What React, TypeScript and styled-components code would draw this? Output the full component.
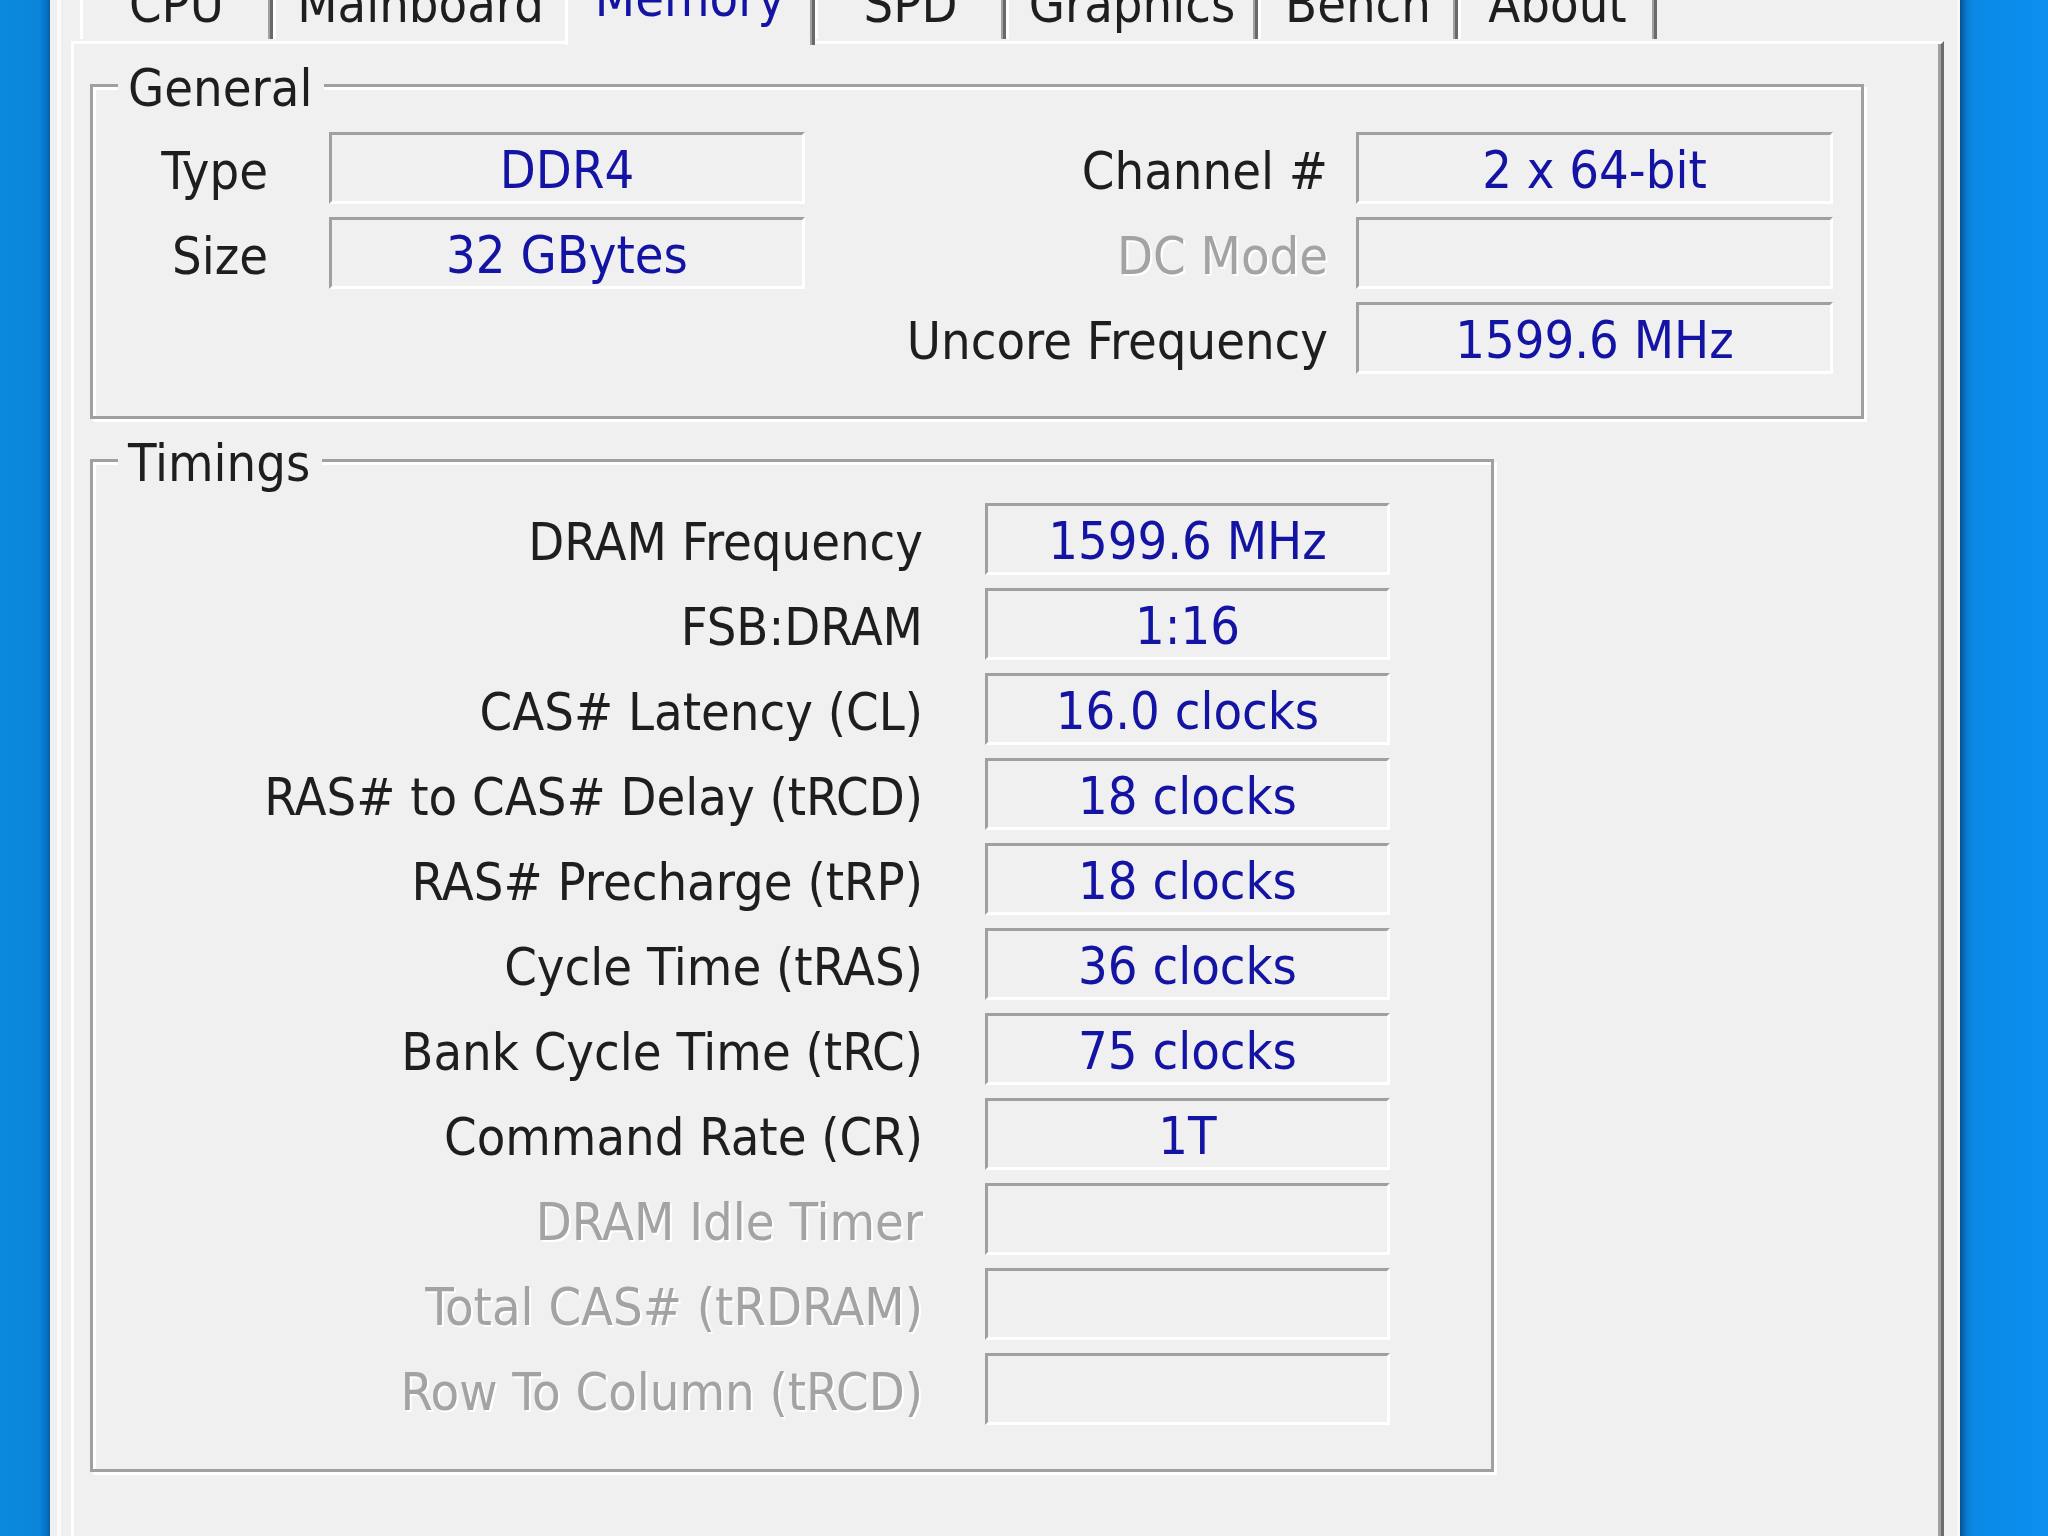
import React from 'react'
import styled, { createGlobalStyle } from 'styled-components'

const GlobalStyle = createGlobalStyle`
  html, body {
    margin: 0;
    padding: 0;
    background: #0a86dc;
  }
  body {
    font-family: "DejaVu Sans Condensed", "Liberation Sans", sans-serif;
    font-size: 52px;
  }
`;

const tabs = ['CPU', 'Mainboard', 'Memory', 'SPD', 'Graphics', 'Bench', 'About'];
const tabWidths = [193, 292, 250, 191, 252, 200, 199];

const timings = [
  { label: 'DRAM Frequency', value: '1599.6 MHz' },
  { label: 'FSB:DRAM', value: '1:16' },
  { label: 'CAS# Latency (CL)', value: '16.0 clocks' },
  { label: 'RAS# to CAS# Delay (tRCD)', value: '18 clocks' },
  { label: 'RAS# Precharge (tRP)', value: '18 clocks' },
  { label: 'Cycle Time (tRAS)', value: '36 clocks' },
  { label: 'Bank Cycle Time (tRC)', value: '75 clocks' },
  { label: 'Command Rate (CR)', value: '1T' },
  { label: 'DRAM Idle Timer', value: '', muted: true },
  { label: 'Total CAS# (tRDRAM)', value: '', muted: true },
  { label: 'Row To Column (tRCD)', value: '', muted: true },
];

const App: React.FC = () => {
  return (
    <>
      <GlobalStyle />
      <Screen>
        <DesktopLeft />
        <Window>
          <TabRow>
            {tabs.map((t, i) => (
              <Tab key={t} $width={tabWidths[i]} $active={t === 'Memory'} $noRight={t === 'Mainboard'}>
                <TabText $active={t === 'Memory'}>{t}</TabText>
              </Tab>
            ))}
          </TabRow>
          <Panel>
            <GroupBox $width={1774}>
              <Legend>General</Legend>
              <GeneralGrid>
                <Label $pad={61}>Type</Label>
                <Field>DDR4</Field>
                <Label $pad={28}>Channel #</Label>
                <Field>2 x 64-bit</Field>

                <Label $pad={61}>Size</Label>
                <Field>32 GBytes</Field>
                <Label $pad={28} $muted>DC Mode</Label>
                <Field></Field>

                <span />
                <span />
                <Label $pad={28}>Uncore Frequency</Label>
                <Field>1599.6 MHz</Field>
              </GeneralGrid>
            </GroupBox>

            <TimingsBox $width={1404}>
              <Legend>Timings</Legend>
              <TimingsGrid>
                {timings.map((r) => (
                  <React.Fragment key={r.label}>
                    <Label $pad={62} $muted={r.muted}>{r.label}</Label>
                    <Field>{r.value}</Field>
                  </React.Fragment>
                ))}
              </TimingsGrid>
            </TimingsBox>
          </Panel>
        </Window>
        <DesktopRight />
      </Screen>
    </>
  )
}

export default App

const Screen = styled.div`
display: flex;
flex-direction: row;
width: 2048px;
height: 1536px;
overflow: hidden;
`;

const DesktopLeft = styled.div`
width: 50px;
flex-shrink: 0;
background: linear-gradient(to right, #0b8ade 0px, #0a84d8 40px, #0670c0 47px, #0a5d9e 50px);
`;

const DesktopRight = styled.div`
flex: 1;
background: linear-gradient(to right, #08508e 0px, #0a78cc 6px, #0a8ae6 14px, #0c8ff0 88px);
`;

const Window = styled.div`
width: 1910px;
flex-shrink: 0;
display: flex;
flex-direction: column;
background: linear-gradient(to right, #f0f0f0 7px, #fbfbfb 7px, #fbfbfb 11px, #f0f0f0 11px);
border-right: 3px solid #f8f8f8;
box-sizing: border-box;
color: #1e1e1e;
`;

const TabRow = styled.div`
display: flex;
flex-direction: row;
height: 41px;
margin-left: 30px;
`;

const Tab = styled.div<{ $width: number; $active?: boolean; $noRight?: boolean }>`
width: ${p => p.$width}px;
height: ${p => (p.$active ? 45 : 39)}px;
box-sizing: border-box;
flex-shrink: 0;
display: flex;
justify-content: center;
background: #f0f0f0;
border-left: 3px solid #ffffff;
border-right: ${p => (p.$noRight ? 'none' : '3px solid #696969')};
box-shadow: ${p => (p.$noRight ? 'none' : 'inset -2px 0 0 #a0a0a0')};
position: ${p => (p.$active ? 'relative' : 'static')};
z-index: ${p => (p.$active ? 1 : 'auto')};
white-space: nowrap;
`;

const TabText = styled.span<{ $active?: boolean }>`
display: block;
line-height: 52px;
height: 52px;
margin-top: ${p => (p.$active ? -28 : -22)}px;
color: ${p => (p.$active ? '#1414a4' : '#1e1e1e')};
`;

const Panel = styled.div`
margin-left: 21px;
width: 1873px;
flex: 1;
box-sizing: border-box;
border-top: 3px solid #ffffff;
border-left: 3px solid #ffffff;
border-right: 3px solid #6b6b6b;
box-shadow: inset -3px 0 0 #a0a0a0;
padding: 40px 0 0 16px;
display: flex;
flex-direction: column;
align-items: flex-start;
background: #f0f0f0;
`;

const GroupBox = styled.div<{ $width: number }>`
position: relative;
width: ${p => p.$width}px;
box-sizing: border-box;
border: 3px solid #a0a0a0;
box-shadow: 3px 3px 0 0 #ffffff, inset 3px 3px 0 0 #ffffff;
padding: 45px 0 42px 0;
`;

const TimingsBox = styled(GroupBox)`
margin-top: 40px;
padding: 41px 0 44px 0;
`;

const Legend = styled.span`
position: absolute;
top: -28px;
left: 25px;
padding: 0 12px 0 10px;
line-height: 58px;
background: #f0f0f0;
color: #1e1e1e;
`;

const GeneralGrid = styled.div`
display: grid;
grid-template-columns: 236px 476px 551px 477px;
grid-auto-rows: 72px;
row-gap: 13px;
`;

const TimingsGrid = styled.div`
display: grid;
grid-template-columns: 892px 405px;
grid-auto-rows: 72px;
row-gap: 13px;
`;

const Label = styled.div<{ $pad: number; $muted?: boolean }>`
display: flex;
align-items: center;
justify-content: flex-end;
padding-right: ${p => p.$pad}px;
padding-top: 5px;
white-space: nowrap;
color: ${p => (p.$muted ? '#a3a3a3' : '#1e1e1e')};
text-shadow: ${p => (p.$muted ? '2px 2px 0 #ffffff' : 'none')};
`;

const Field = styled.div`
display: flex;
align-items: center;
justify-content: center;
box-sizing: border-box;
height: 72px;
padding-top: 4px;
border-top: 3px solid #a0a0a0;
border-left: 3px solid #a0a0a0;
border-bottom: 3px solid #ffffff;
border-right: 3px solid #ffffff;
background: #f0f0f0;
color: #1414a4;
white-space: nowrap;
`;
